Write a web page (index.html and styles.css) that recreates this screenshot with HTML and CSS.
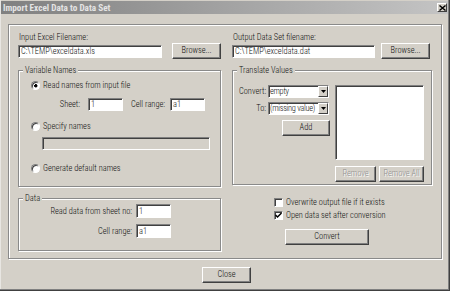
FILE: index.html
```html
<!DOCTYPE html>
<html>
<head>
<meta charset="utf-8">
<title>Import Excel Data to Data Set</title>
<link rel="stylesheet" href="styles.css">
</head>
<body>
<div class="window">
  <div class="titlebar">
    <span class="title">Import Excel Data to Data Set</span>
    <span class="xbtn"><svg width="7" height="6" viewBox="0 0 7 6"><path d="M0.5 0.5 L6.5 5.5 M6.5 0.5 L0.5 5.5" stroke="#000" stroke-width="1.4" fill="none"/></svg></span>
  </div>
  <div class="panel">
    <div class="col">
      <div class="lbl">Input Excel Filename:</div>
      <div class="filerow gap10">
        <div class="tb file-l">C:\TEMP\exceldata.xls</div>
        <div class="btn browse">Browse...</div>
      </div>
      <div class="group vn">
        <span class="gtitle">Variable Names</span>
        <div class="opt"><span class="radio on"></span>Read names from input file</div>
        <div class="sheetrow">
          <span class="l1">Sheet:</span>
          <div class="tb sm">1</div>
          <span class="l2">Cell range:</span>
          <div class="tb sm">a1</div>
        </div>
        <div class="opt spec"><span class="radio"></span>Specify names</div>
        <div class="tb disabled names"></div>
        <div class="opt gen"><span class="radio"></span>Generate default names</div>
      </div>
      <div class="group data">
        <span class="gtitle">Data</span>
        <div class="datagrid">
          <span class="rl">Read data from sheet no:</span>
          <div class="tb sm h14">1</div>
          <span class="rl">Cell range:</span>
          <div class="tb sm h14">a1</div>
        </div>
      </div>
    </div>
    <div class="col">
      <div class="lbl">Output Data Set filename:</div>
      <div class="filerow gap6">
        <div class="tb file-r">C:\TEMP\exceldata.dat</div>
        <div class="btn browse">Browse...</div>
      </div>
      <div class="group tv">
        <span class="gtitle">Translate Values</span>
        <div class="tvgrid">
          <div class="tvleft">
            <span class="rl">Convert:</span>
            <div class="tb combo"><span class="ctext">empty</span><span class="dd"><svg width="5" height="3" viewBox="0 0 5 3"><path d="M0 0 H5 L2.5 3 Z" fill="#000"/></svg></span></div>
            <span class="rl">To:</span>
            <div class="tb combo"><span class="ctext">(missing value)</span><span class="dd"><svg width="5" height="3" viewBox="0 0 5 3"><path d="M0 0 H5 L2.5 3 Z" fill="#000"/></svg></span></div>
            <div class="btn add">Add</div>
          </div>
          <div class="tb listbox"></div>
          <div></div>
          <div class="rmrow">
            <div class="btn dis rm">Remove</div>
            <div class="btn dis rmall">Remove All</div>
          </div>
        </div>
      </div>
      <div class="chk first"><span class="box"></span>Overwrite output file if it exists</div>
      <div class="chk second"><span class="box"><svg width="7" height="7" viewBox="0 0 7 7"><path d="M0.5 3 L2.5 5 L6.5 1" stroke="#000" stroke-width="1.5" fill="none"/></svg></span>Open data set after conversion</div>
      <div class="btn convert">Convert</div>
    </div>
  </div>
  <div class="btn close">Close</div>
</div>
</body>
</html>
```

FILE: styles.css
```css
html, body {
  margin: 0;
  padding: 0;
  background: #d4d0c8;
}

.window {
  width: 450px;
  height: 291px;
  box-sizing: border-box;
  background: #d4d0c8;
  box-shadow: inset -1px -1px 0 #404040, inset -2px -2px 0 #808080, inset 1px 0 0 #e8e6e2;
  font-family: "Roboto Condensed", "Liberation Sans", Arial, sans-serif;
  font-weight: 300;
  font-size: 8.4px;
  line-height: 11px;
  color: #111;
  display: flex;
  flex-direction: column;
  overflow: hidden;
}

.titlebar {
  height: 13px;
  margin: 1px 2px 0 1px;
  background: linear-gradient(to right, #808080, #c4c4c4);
  display: flex;
  align-items: center;
  justify-content: space-between;
  padding-left: 2px;
}

.title {
  color: #e4e4e4;
  font-weight: bold;
  font-size: 9.2px;
}

.xbtn {
  width: 10px;
  height: 9px;
  box-sizing: border-box;
  margin-right: 1px;
  background: #d4d0c8;
  border: 1px solid;
  border-color: #fff #404040 #404040 #fff;
  display: flex;
  align-items: center;
  justify-content: center;
}

.panel {
  margin: 10px 0 0 8px;
  width: 434px;
  height: 235px;
  box-sizing: border-box;
  border: 1px solid #8a8a8a;
  box-shadow: inset 1px 1px 0 #fff, 1px 1px 0 #fff;
  padding: 7px 0 0 9px;
  display: grid;
  grid-template-columns: 203px 200px;
  column-gap: 11px;
  align-items: start;
}

.col {
  display: flex;
  flex-direction: column;
}

.lbl {
  height: 11px;
  padding-left: 1px;
}

.filerow {
  display: flex;
  align-items: center;
  height: 16px;
}
.gap10 { gap: 10px; }
.gap6 { gap: 6px; }

.tb {
  box-sizing: border-box;
  height: 13px;
  background: #fff;
  border: 1px solid;
  border-color: #808080 #fff #fff #808080;
  box-shadow: inset 1px 1px 0 #404040;
  padding-left: 2px;
  line-height: 11px;
  white-space: nowrap;
  overflow: hidden;
}
.h14 { height: 14px; line-height: 12px; }
.file-l { width: 144px; }
.file-r { width: 143px; }
.sm { width: 35px; }
.disabled { background: #d4d0c8; }

.btn {
  box-sizing: border-box;
  height: 16px;
  background: #d4d0c8;
  border: 1px solid;
  border-color: #fff #404040 #404040 #fff;
  box-shadow: inset -1px -1px 0 #808080;
  text-align: center;
  line-height: 13px;
  white-space: nowrap;
}
.btn.dis {
  color: #909090;
  text-shadow: 1px 1px 0 #fff;
}
.browse { width: 49px; }

.group {
  position: relative;
  box-sizing: border-box;
  border: 1px solid #8a8a8a;
  box-shadow: inset 1px 1px 0 #fff, 1px 1px 0 #fff;
  margin-top: 11px;
}
.gtitle {
  position: absolute;
  top: -6px;
  left: 4px;
  padding: 0 2px;
  background: #d4d0c8;
  line-height: 11px;
}

.vn {
  height: 117px;
  padding: 9px 0 0 12px;
}
.opt {
  display: flex;
  align-items: center;
  height: 11px;
  gap: 3px;
  white-space: nowrap;
}
.radio {
  width: 9px;
  height: 9px;
  box-sizing: border-box;
  border-radius: 50%;
  border: 1px solid;
  border-color: #808080 #fff #fff #808080;
  background: #fff;
  box-shadow: inset 1px 1px 0 #404040;
}
.radio.on {
  background: radial-gradient(circle at 55% 55%, #000 0, #000 1.4px, #fff 1.9px);
}
.sheetrow {
  display: flex;
  align-items: center;
  margin: 7px 0 0 11px;
  height: 13px;
  white-space: nowrap;
}
.sheetrow .l1 { width: 38px; text-align: right; margin-right: 8px; }
.sheetrow .l2 { width: 37px; text-align: right; margin: 0 5px 0 5px; }
.spec { margin-top: 10px; }
.names { width: 168px; margin: 5px 0 0 11px; }
.gen { margin-top: 13px; }

.data {
  height: 53px;
  padding-top: 5px;
}
.datagrid {
  display: grid;
  grid-template-columns: 113px 35px;
  column-gap: 4px;
  row-gap: 6px;
  align-items: center;
}
.rl { text-align: right; white-space: nowrap; }

.tv {
  height: 115px;
  padding: 14px 0 0 6px;
}
.tvgrid {
  display: grid;
  grid-template-columns: 90px 89px;
  column-gap: 6px;
  row-gap: 6px;
  align-items: start;
}
.tvleft {
  display: grid;
  grid-template-columns: 27px 61px;
  column-gap: 2px;
  row-gap: 4px;
  align-items: center;
}
.combo {
  display: flex;
  align-items: stretch;
  padding-left: 1px;
}
.ctext {
  flex: 1;
  overflow: hidden;
  letter-spacing: -0.3px;
}
.dd {
  width: 10px;
  box-sizing: border-box;
  background: #d4d0c8;
  border: 1px solid;
  border-color: #fff #404040 #404040 #fff;
  display: flex;
  align-items: center;
  justify-content: center;
}
.add {
  grid-column: 1 / 3;
  justify-self: end;
  width: 48px;
  margin-top: 1px;
  margin-right: -1px;
}
.listbox {
  width: 89px;
  height: 75px;
}
.rmrow {
  display: flex;
  gap: 3px;
}
.rm { width: 41px; }
.rmall { width: 45px; }

.chk {
  display: flex;
  align-items: center;
  gap: 3px;
  height: 11px;
  margin-left: 42px;
  white-space: nowrap;
}
.chk.first { margin-top: 12px; }
.chk.second { margin-top: 2px; }
.box {
  width: 9px;
  height: 9px;
  box-sizing: border-box;
  background: #fff;
  border: 1px solid;
  border-color: #808080 #fff #fff #808080;
  box-shadow: inset 1px 1px 0 #404040;
  display: flex;
  align-items: center;
  justify-content: center;
}
.convert {
  width: 84px;
  margin: 8px 0 0 53px;
}

.close {
  width: 49px;
  margin: 8px 0 0 202px;
}
```
